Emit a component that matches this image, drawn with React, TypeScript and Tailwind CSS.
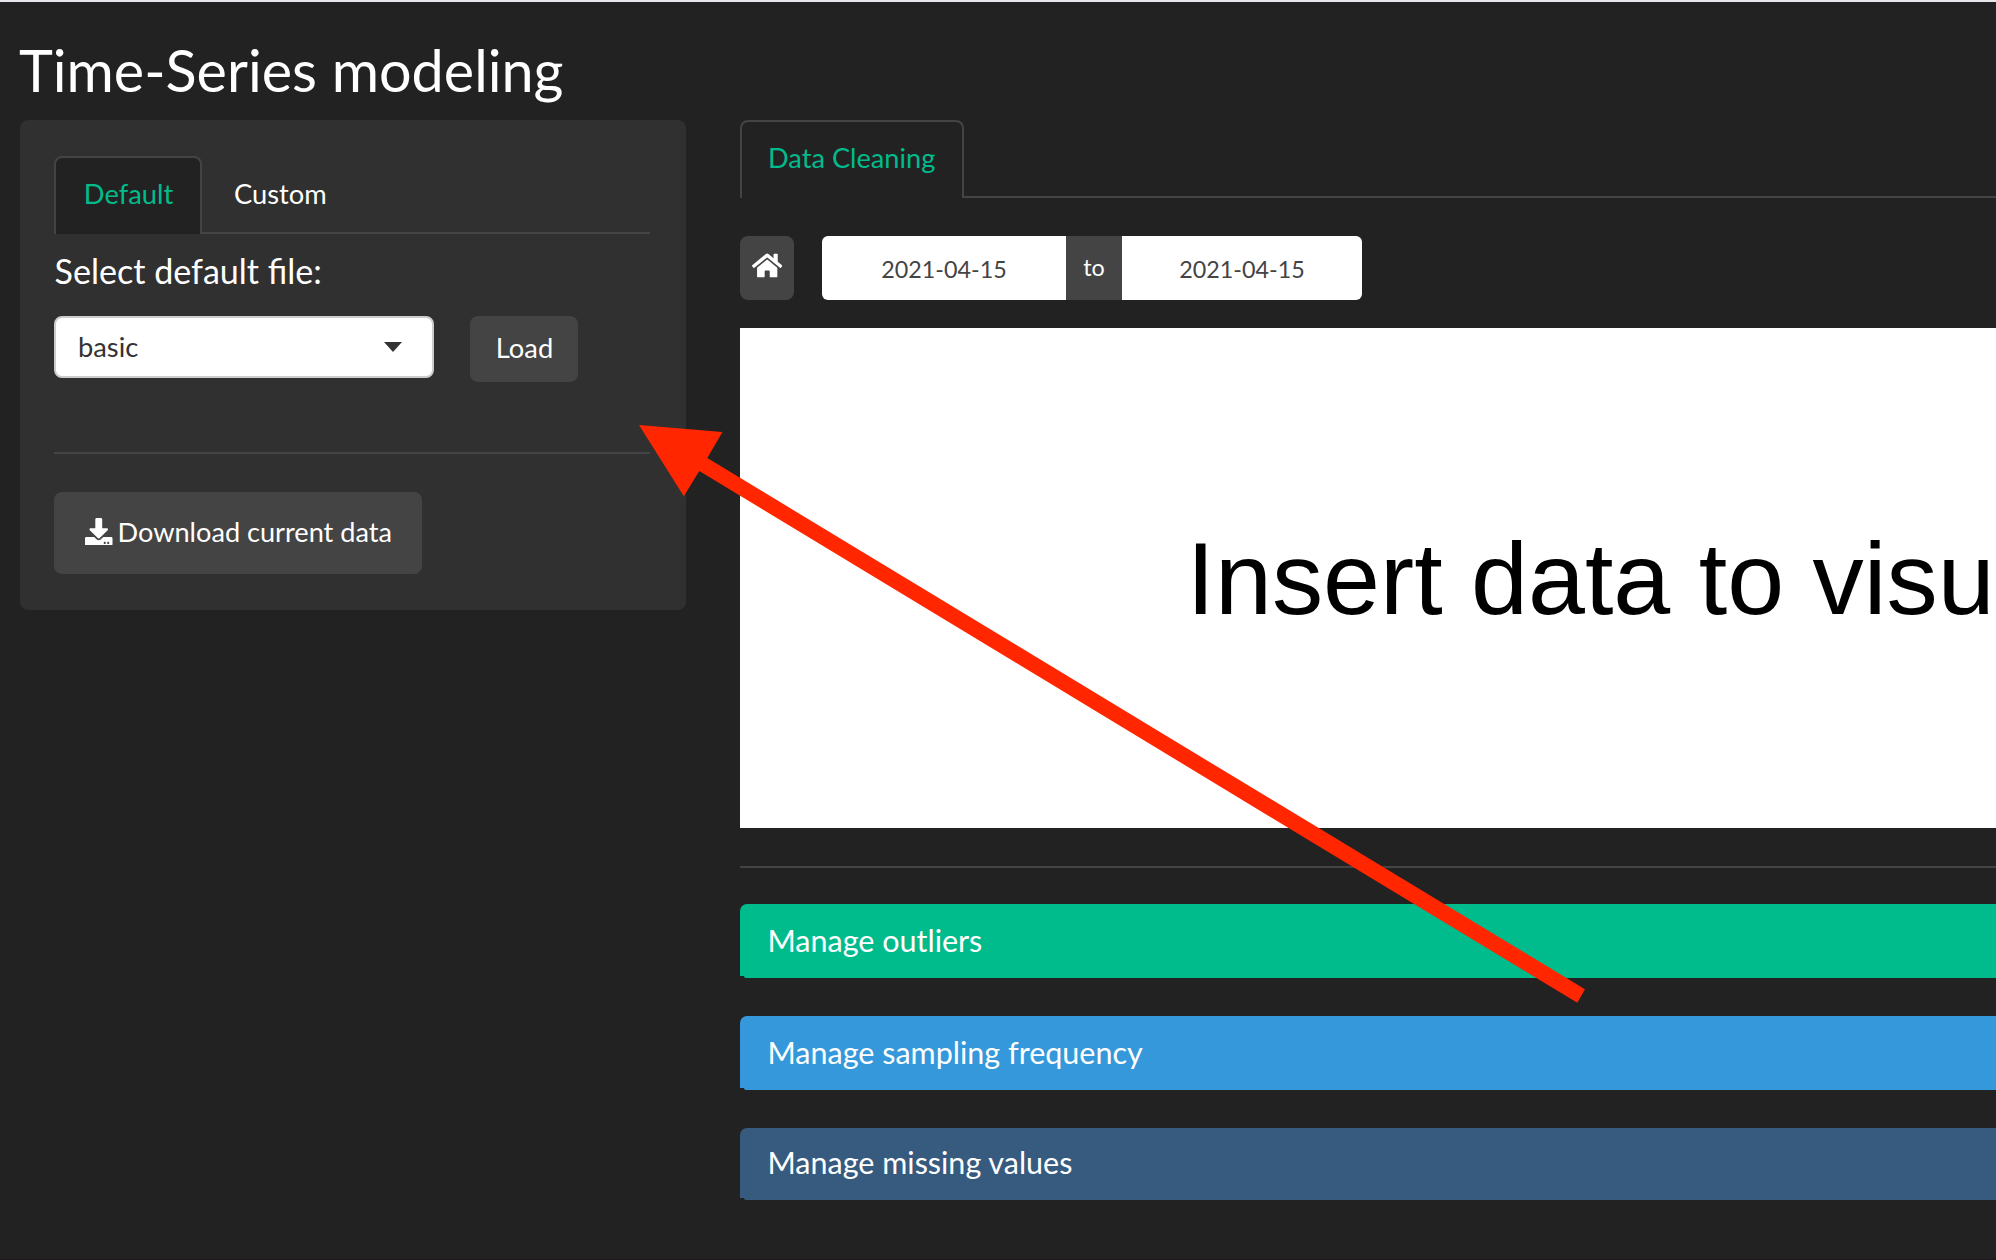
import { FaDownload, FaHome } from "react-icons/fa";

function Bar({ label, tone, className }: { label: string; tone: string; className: string }) {
  return (
    <section>
      <div className={`flex items-center rounded-tl-[7px] pl-[27.5px] text-[30.5px] ${tone} ${className}`}>
        <span>{label}</span>
      </div>
      <div className={`ml-[4px] h-[2px] rounded-bl-[2px] ${tone}`} />
    </section>
  );
}

function Sidebar() {
  return (
    <aside className="h-[490px] w-[666px] shrink-0 rounded-[8px] bg-[#303030] pl-[34px] pr-[36px] pt-[36px]">
      <nav className="flex h-[78px]">
        <div className="flex w-[148px] justify-center rounded-t-[8px] border-x-2 border-t-2 border-[#444] bg-[#222] pl-px pt-[18px] leading-9 text-[#00bc8c]">
          Default
        </div>
        <div className="flex-1 border-b-2 border-[#444] pl-[32px] pt-[20px] leading-9">Custom</div>
      </nav>
      <h4 className="ml-[0.5px] mt-[17px] text-[34.1px] leading-[40px]">Select default file:</h4>
      <div className="mt-[25px] flex h-[66px] items-start">
        <div className="flex h-[62px] w-[380px] items-center justify-between rounded-[8px] border-2 border-[#ccc] bg-white pl-[22px] pr-[30px] pt-px text-[#333]">
          <span>basic</span>
          <svg className="mt-[-2px] h-[10px] w-[18px]" viewBox="0 0 18 10">
            <path d="M0 0H18L9 10Z" fill="#333" />
          </svg>
        </div>
        <button className="ml-[36px] h-[66px] w-[108px] rounded-[8px] bg-[#444] pb-px pl-px">Load</button>
      </div>
      <hr className="mt-[70px] border-0 border-t-2 border-[#444]" />
      <button className="mt-[38px] flex h-[82px] w-[368px] items-center rounded-[8px] bg-[#444] pb-px pl-[31px] whitespace-nowrap">
        <FaDownload className="mt-[-2px] size-[27.5px]" />
        <span className="ml-[5px] text-[27.15px]">Download current data</span>
      </button>
    </aside>
  );
}

function Cleaning() {
  return (
    <main className="ml-[54px] min-w-0 flex-1">
      <nav className="flex h-[78px]">
        <div className="w-[223.5px] rounded-t-[8px] border-x-2 border-t-2 border-[#444] pl-[26px] pt-[17.5px] text-[27.2px] leading-9 whitespace-nowrap text-[#00bc8c]">
          Data Cleaning
        </div>
        <div className="flex-1 border-b-2 border-[#444]" />
      </nav>
      <div className="mt-[38px] flex h-[64px]">
        <button className="flex w-[54px] justify-center rounded-[8px] bg-[#444] pt-[16px]">
          <FaHome className="h-[27px] w-[30.4px]" />
        </button>
        <div className="ml-[28px] flex text-[23.3px]">
          <div className="flex w-[244px] items-center justify-center rounded-l-[6px] bg-white pt-[2px] text-[#444]">2021-04-15</div>
          <div className="flex w-[56px] items-center justify-center bg-[#444] pb-[2px]">to</div>
          <div className="flex w-[240px] items-center justify-center rounded-r-[6px] bg-white pt-[2px] text-[#444]">2021-04-15</div>
        </div>
      </div>
      <div className="mt-[28px] flex h-[500px] items-center overflow-hidden bg-white pl-[446.5px] pt-[3px] font-['Liberation_Sans',sans-serif] text-[102.4px] leading-none whitespace-nowrap text-black">
        Insert data to visu
      </div>
      <hr className="mt-[38px] border-0 border-t-2 border-[#444]" />
      <div className="mt-[36px] flex flex-col gap-[38px]">
        <Bar label="Manage outliers" tone="bg-[#00bc8c]" className="h-[72px] pt-[2px]" />
        <Bar label="Manage sampling frequency" tone="bg-[#3498db]" className="h-[72px] pt-[2px]" />
        <Bar label="Manage missing values" tone="bg-[#375a7f]" className="h-[70px]" />
      </div>
    </main>
  );
}

export default function App() {
  return (
    <div className="relative h-[1260px] w-[1996px] overflow-hidden border-b border-t-2 border-b-[#1e181e] border-t-[#e7e7ec] bg-[#222] font-[Lato,sans-serif] text-[27.3px] text-white">
      <h2 className="ml-[19px] mt-[38px] text-[57.5px] leading-[60px]">Time-Series modeling</h2>
      <div className="ml-[20px] mt-[20px] flex">
        <Sidebar />
        <Cleaning />
      </div>
      <svg className="pointer-events-none absolute left-0 top-[-2px] h-[1260px] w-[1996px]" viewBox="0 0 1996 1260">
        <path d="M639 425L722.5 432L707.3 458L1585 989.3L1577.3 1002.8L699.3 471L683.8 496.3Z" fill="#ff2600" />
      </svg>
    </div>
  );
}
